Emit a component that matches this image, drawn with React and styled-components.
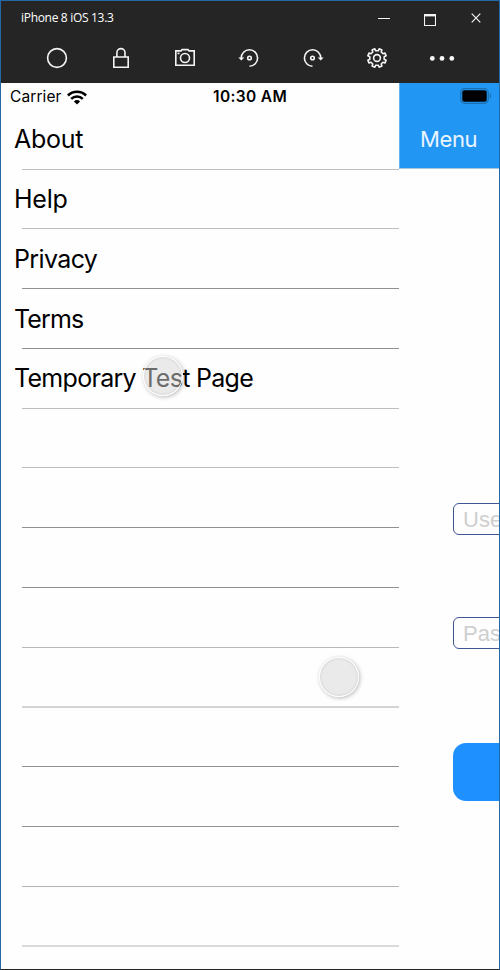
import React from 'react';
import styled, { createGlobalStyle } from 'styled-components';

const GlobalStyle = createGlobalStyle`
  * { box-sizing: border-box; }
  html, body { margin: 0; padding: 0; background: #fff; overflow: hidden; }
`;

const Window = styled.div`
  position: relative;
  display: flex;
  flex-direction: column;
  width: 500px;
  height: 970px;
  overflow: hidden;
  background: #fefefe;
  border: 1px solid #2469a7;
  border-bottom-color: #252525;
  font-family: Inter, 'Liberation Sans', sans-serif;
  color: #000;
`;

const TitleBar = styled.header`
  display: flex;
  align-items: center;
  height: 34px;
  flex: none;
  padding-left: 20px;
  background: #252525;
`;

const Title = styled.h1`
  flex: 1;
  margin: 0;
  font: 400 12px/16px 'Open Sans', 'Noto Sans', sans-serif;
  letter-spacing: -0.31px;
  color: #fff;
`;

const WindowButton = styled.button`
  display: flex;
  align-items: center;
  justify-content: center;
  width: 46px;
  height: 34px;
  padding: ${(p) => p.$drop || 0}px 0 0;
  border: 0;
  background: none;
`;

const Toolbar = styled.nav`
  display: flex;
  align-items: center;
  height: 48px;
  flex: none;
  padding: 0 24px 2px;
  background: #252525;
`;

const ToolButton = styled.button`
  display: flex;
  align-items: center;
  justify-content: center;
  width: 64px;
  height: 46px;
  padding: 0;
  border: 0;
  background: none;
`;

const Icon = styled.svg`
  display: block;
  flex: none;
  fill: none;
  stroke: #f4f4f4;
  stroke-width: 1.6;
`;

const Screen = styled.main`
  display: flex;
  flex: 1;
  min-height: 0;
`;

const Drawer = styled.aside`
  width: 398px;
  flex: none;
`;

const StatusBar = styled.div`
  display: flex;
  align-items: center;
  height: 27px;
  padding: 1px 0 0 9px;
  font-size: 15.5px;
  line-height: 20px;
`;

const Carrier = styled.span`
  width: 57px;
  letter-spacing: 0.1px;
`;

const Time = styled.span`
  margin-left: 126px;
  font-weight: 600;
  letter-spacing: 0.35px;
  white-space: nowrap;
`;

const Menu = styled.ul`
  margin: 0;
  padding: 0;
  list-style: none;
`;

const MenuRow = styled.li`
  display: flex;
  flex-direction: column;
  height: ${(p) => p.$height}px;
`;

const Label = styled.span`
  flex: 1;
  padding: ${(p) => p.$top}px 0 0 13px;
  font-size: 25px;
  line-height: 32px;
  letter-spacing: ${(p) => p.$spacing}px;
  white-space: nowrap;
`;

const Divider = styled.div`
  height: ${(p) => p.$thickness}px;
  margin-left: 21px;
  background: ${(p) => p.$color};
`;

const Page = styled.section`
  display: flex;
  flex-direction: column;
  flex: 1;
  overflow: hidden;
`;

const PageHeader = styled.header`
  display: flex;
  flex-direction: column;
  height: 86px;
  flex: none;
  background: #2196f3;
  border-left: 1px solid #64b1ef;
  border-bottom: 1px solid #a9c6df;
`;

const BatteryRow = styled.div`
  display: flex;
  height: 40px;
  padding: 5px 0 0 60px;
`;

const HeaderTitle = styled.span`
  padding-left: 20px;
  font-size: 22px;
  line-height: 32px;
  color: #e9f5ff;
  letter-spacing: -0.4px;
`;

const Form = styled.form`
  display: flex;
  flex-direction: column;
  width: 160px;
  padding: 334px 0 0 53.5px;
`;

const Field = styled.div`
  display: flex;
  align-items: center;
  height: 32px;
  margin-bottom: ${(p) => p.$gap}px;
  padding: 2px 0 0 9.5px;
  border: 1.5px solid #3d5590;
  border-radius: 6px;
  font: 400 22px/28px 'Liberation Sans', sans-serif;
  color: #cfcfcf;
`;

const Submit = styled.button`
  height: 58px;
  border: 0;
  border-radius: 13px;
  background: #1e90ff;
`;

const Touch = styled.div`
  position: absolute;
  left: ${(p) => p.$x}px;
  top: ${(p) => p.$y}px;
  width: 40px;
  height: 40px;
  border: 1.5px solid #fff;
  border-radius: 50%;
  background: rgba(214, 214, 214, 0.5);
  box-shadow: 1px 1px 4px rgba(0, 0, 0, 0.28), inset 0 0 3px rgba(0, 0, 0, 0.14);
`;

const rows = [
  { label: 'About', height: 60, color: '#bfbfbf', spacing: -0.3, top: 13 },
  { label: 'Help', height: 59, color: '#bdbdbd', spacing: -0.25, top: 13 },
  { label: 'Privacy', height: 60, color: '#929292', spacing: -0.62, top: 14 },
  { label: 'Terms', height: 60, color: '#929292', spacing: -0.85, top: 14 },
  { label: 'Temporary Test Page', height: 60, color: '#bdbdbd', spacing: -0.7, top: 13 },
  { height: 59, color: '#bdbdbd' },
  { height: 60, color: '#929292' },
  { height: 60, color: '#929292' },
  { height: 60, color: '#b8b8b8' },
  { height: 60, color: '#d4d4d4', thickness: 2 },
  { height: 59, color: '#929292' },
  { height: 60, color: '#929292' },
  { height: 60, color: '#b4b4b4' },
  { height: 60, color: '#dadada', thickness: 2 },
];

const RotateShape = () => (
  <>
    <path d="M11.5 19.2A8.2 8.2 0 1 0 3.2 11" />
    <path d="M.3 10.4h6L3.3 13.6z" fill="#f4f4f4" stroke="none" />
    <circle cx="11.5" cy="11" r="1.8" />
  </>
);

const gearPath = (() => {
  const pts = [];
  for (let i = 0; i < 8; i += 1) {
    [[-0.22, 7.3], [-0.16, 9.4], [0.16, 9.4], [0.22, 7.3]].forEach(([d, r]) => {
      const a = (i * Math.PI) / 4 + Math.PI / 8 + d;
      pts.push(`${(11 + r * Math.sin(a)).toFixed(2)} ${(11 - r * Math.cos(a)).toFixed(2)}`);
    });
  }
  return `M${pts.join('L')}Z`;
})();

export default function App() {
  return (
    <>
      <GlobalStyle />
      <Window>
        <TitleBar>
          <Title>iPhone 8 iOS 13.3</Title>
          <WindowButton aria-label="Minimize">
            <Icon width="12" height="12"><path d="M0 6.5h12" strokeWidth="1" /></Icon>
          </WindowButton>
          <WindowButton aria-label="Maximize" $drop={4}>
            <Icon width="12" height="12"><path d="M.5 0v11.5h11V0" strokeWidth="1.1" /><path d="M0 1.2h12" strokeWidth="2.4" /></Icon>
          </WindowButton>
          <WindowButton aria-label="Close">
            <Icon width="10" height="10"><path d="m.7.7 8.6 8.6m0-8.6L.7 9.3" strokeWidth="1.2" /></Icon>
          </WindowButton>
        </TitleBar>
        <Toolbar>
          <ToolButton aria-label="Home">
            <Icon width="22" height="22"><circle cx="11" cy="11" r="9.4" /></Icon>
          </ToolButton>
          <ToolButton aria-label="Lock">
            <Icon width="22" height="22"><path d="M3.8 10h14.4v10.2H3.8zM6.9 10V5.7a4 4 0 0 1 8.1 0V10" /></Icon>
          </ToolButton>
          <ToolButton aria-label="Screenshot">
            <Icon width="22" height="22"><path d="M1.8 3.9H7l1-1.3h6l1 1.3h5.2v14.3H1.8z" /><circle cx="11" cy="11" r="4.5" /><path d="M3.5 6.4h2" /></Icon>
          </ToolButton>
          <ToolButton aria-label="Rotate left">
            <Icon width="22" height="22"><RotateShape /></Icon>
          </ToolButton>
          <ToolButton aria-label="Rotate right">
            <Icon width="22" height="22"><g transform="translate(22 0) scale(-1 1)"><RotateShape /></g></Icon>
          </ToolButton>
          <ToolButton aria-label="Settings">
            <Icon width="22" height="22"><path d={gearPath} strokeLinejoin="round" /><circle cx="11" cy="11" r="3.4" /></Icon>
          </ToolButton>
          <ToolButton aria-label="More">
            <Icon width="28" height="22"><g fill="#f8f8f8" stroke="none"><circle cx="5.3" cy="11.4" r="2.4" /><circle cx="15" cy="11.4" r="2.4" /><circle cx="24.8" cy="11.4" r="2.4" /></g></Icon>
          </ToolButton>
        </Toolbar>
        <Screen>
          <Drawer>
            <StatusBar>
              <Carrier>Carrier</Carrier>
              <Icon width="20" height="15" viewBox="0 0 20 15">
                <path d="M.9 5.5a13 13 0 0 1 18.2 0M4.2 8.9a8.4 8.4 0 0 1 11.6 0" stroke="#000" strokeWidth="2.5" />
                <path d="M6.9 11.5a4.6 4.6 0 0 1 6.2 0L10 14.6z" fill="#000" stroke="none" />
              </Icon>
              <Time>10:30 AM</Time>
            </StatusBar>
            <Menu>
              {rows.map((row, i) => (
                <MenuRow key={i} $height={row.height}>
                  <Label $spacing={row.spacing || 0} $top={row.top || 0}>{row.label}</Label>
                  <Divider $color={row.color} $thickness={row.thickness || 1} />
                </MenuRow>
              ))}
            </Menu>
          </Drawer>
          <Page>
            <PageHeader>
              <BatteryRow>
                <Icon width="32" height="16">
                  <rect x=".7" y=".7" width="27.6" height="14.6" rx="4" stroke="#1b6fae" strokeWidth="1.2" />
                  <rect x="2.3" y="2.3" width="24.4" height="11.4" rx="2" fill="#000" stroke="none" />
                  <path d="M29.8 5.3q3 2.7 0 5.4z" fill="#1b6fae" stroke="none" />
                </Icon>
              </BatteryRow>
              <HeaderTitle>Menu</HeaderTitle>
            </PageHeader>
            <Form>
              <Field $gap={82}>Username</Field>
              <Field $gap={94}>Password</Field>
              <Submit type="button" aria-label="Sign in" />
            </Form>
          </Page>
        </Screen>
        <Touch $x={142} $y={355} />
        <Touch $x={318} $y={656} />
      </Window>
    </>
  );
}
